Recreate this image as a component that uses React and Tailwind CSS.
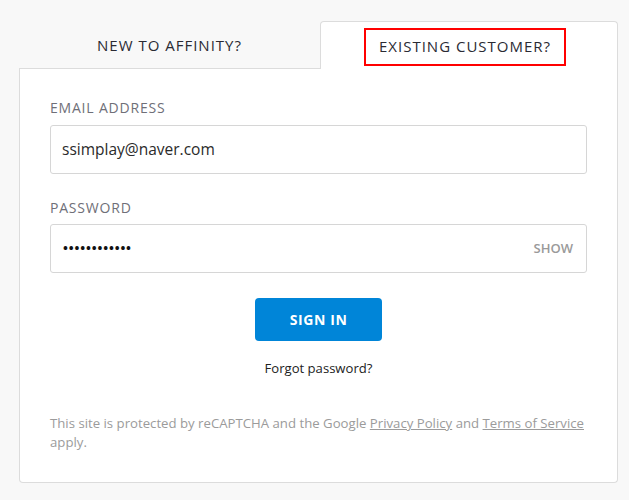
export default function App() {
  return (
    <div className="w-full h-[500px] bg-[#f8f8f8] pt-[21px] pl-[19px] pr-[11px]"
         style={{ fontFamily: '"Open Sans", "Liberation Sans", sans-serif' }}>
      {/* tabs */}
      <div className="flex h-[48px]">
        <div className="w-[301px] border-b border-[#dcdcdc] flex items-center justify-center">
          <span className="text-[15px] font-medium tracking-[1px] text-[#2a2a33] mt-[1px]">NEW TO AFFINITY?</span>
        </div>
        <div className="flex-1 bg-white border border-b-0 border-[#dcdcdc] rounded-t-[4px] flex items-start justify-center pt-[6px] pr-[8px]">
          <span className="h-[38px] w-[202px] border-2 border-[#ff0000] flex items-center justify-center text-[15px] font-medium tracking-[1px] text-[#2a2a33] pb-[1px]">
            EXISTING CUSTOMER?
          </span>
        </div>
      </div>

      {/* body */}
      <div className="bg-white border border-t-0 border-[#dcdcdc] rounded-b-[4px] px-[30px] pt-[29px] pb-[30px]">
        <label className="block text-[14px] leading-[20px] font-medium tracking-[0.8px] text-[#6f6f78]">EMAIL ADDRESS</label>
        <div className="mt-[7px] h-[49px] border border-[#d6d6d6] rounded-[3px] flex items-center px-[11px]">
          <span className="text-[15.5px] text-[#2a2a2a]">ssimplay@naver.com</span>
        </div>

        <label className="block mt-[24px] text-[14px] leading-[20px] font-medium tracking-[0.8px] text-[#6f6f78]">PASSWORD</label>
        <div className="mt-[6px] h-[49px] border border-[#d6d6d6] rounded-[3px] flex items-center justify-between pl-[12px] pr-[13px]">
          <span className="text-[13px] tracking-[0.85px] text-[#111] font-bold">••••••••••••</span>
          <span className="text-[13px] font-semibold text-[#9a9a9a]">SHOW</span>
        </div>

        <div className="flex justify-center mt-[25px]">
          <button className="w-[127px] h-[43px] bg-[#0085d8] rounded-[4px] text-white text-[14px] font-bold tracking-[0.6px]">
            SIGN IN
          </button>
        </div>

        <p className="text-center mt-[17px] text-[13.1px] leading-[20px] text-[#222]">Forgot password?</p>

        <p className="mt-[36px] text-[13.2px] leading-[19px] text-[#9b9b9b]">
          This site is protected by reCAPTCHA and the Google <span className="underline">Privacy Policy</span> and <span className="underline">Terms of Service</span> apply.
        </p>
      </div>
    </div>
  );
}
